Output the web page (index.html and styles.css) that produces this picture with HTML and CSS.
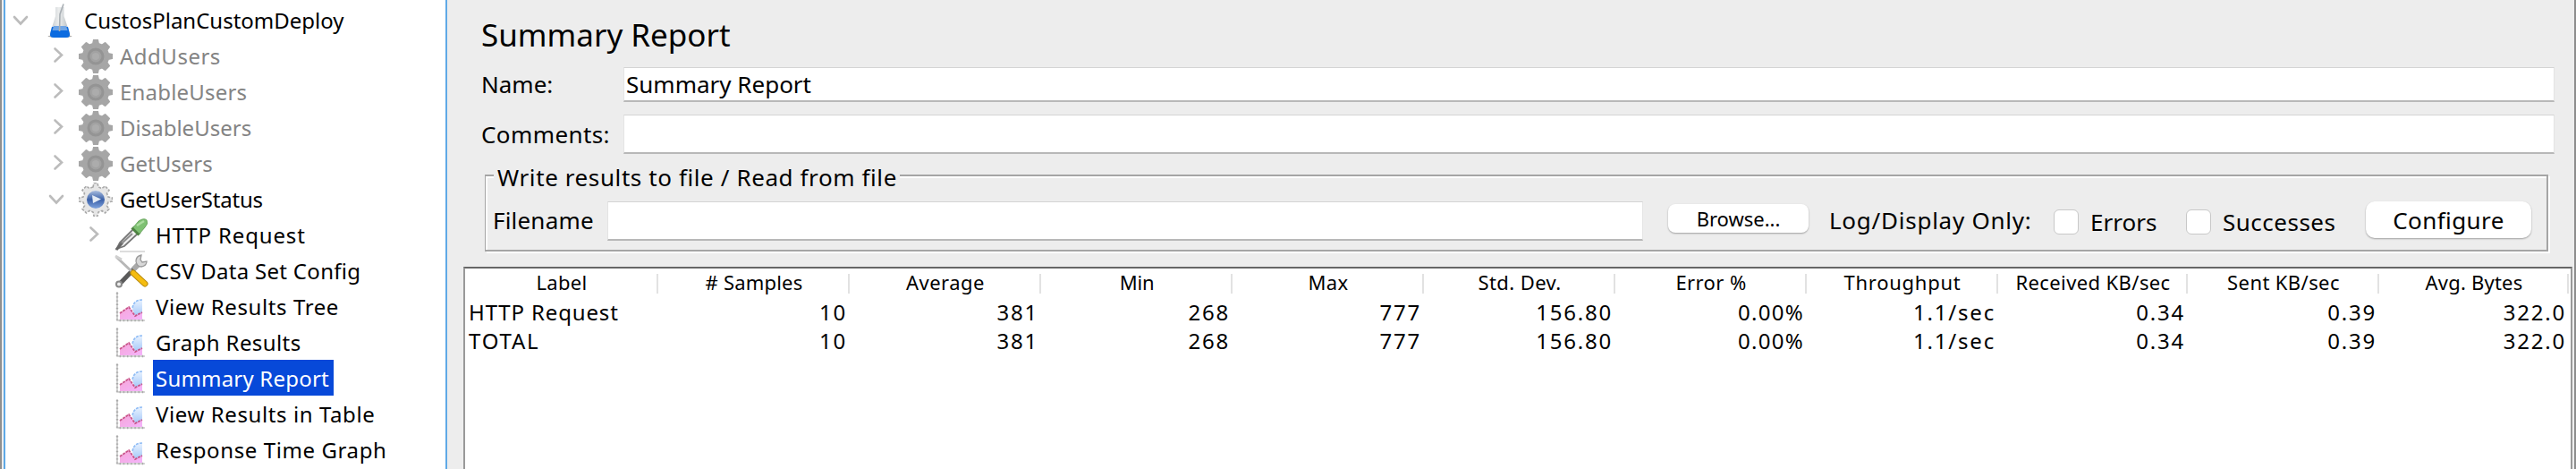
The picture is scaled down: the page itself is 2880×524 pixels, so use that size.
FILE: index.html
```html
<!DOCTYPE html>
<html lang="en"><head><meta charset="utf-8"><title>Summary Report</title>
<link rel="stylesheet" href="styles.css"></head>
<body>
<svg class="defs" width="0" height="0">
<defs>
<linearGradient id="ball" x1="0" y1="0" x2="0" y2="1"><stop offset="0" stop-color="#a9bddf"/><stop offset=".5" stop-color="#3a60a8"/><stop offset="1" stop-color="#7fa3de"/></linearGradient>
<linearGradient id="pink" x1="0" y1="0" x2="1" y2="1"><stop offset="0" stop-color="#f6a6d8"/><stop offset="1" stop-color="#f4b4fb"/></linearGradient>
<linearGradient id="sky" x1="0" y1="0" x2="0" y2="1"><stop offset="0" stop-color="#e8f2ff"/><stop offset="1" stop-color="#a4c8f8"/></linearGradient>
<linearGradient id="glass" x1="0" y1="0" x2="1" y2="0"><stop offset="0" stop-color="#c3c8cc"/><stop offset=".45" stop-color="#eceeee"/><stop offset="1" stop-color="#b4babf"/></linearGradient>
<path id="teeth" d="M16 5 L17 0.500 H21 L22 5 L26 6.500 L29.500 4 L34 8.500 L31.500 12 L33 16 L37.500 17 V21 L33 22 L31.500 26 L34 29.500 L29.500 34 L26 31.500 L22 33 L21 37.500 H17 L16 33 L12 31.500 L8.500 34 L4 29.500 L6.500 26 L5 22 L0.500 21 V17 L5 16 L6.500 12 L4 8.500 L8.500 4 L12 6.500 Z"/>
<symbol id="gear-off" viewBox="0 0 38 38"><use href="#teeth" fill="#a6a6a6" stroke="#a6a6a6" stroke-width="2" stroke-linejoin="round"/><circle cx="19" cy="19" r="8" fill="#a2a2a2" stroke="#949494" stroke-width="3"/><circle cx="19" cy="19" r="4" fill="#acacac"/></symbol>
<symbol id="gear-on" viewBox="0 0 38 38"><use href="#teeth" fill="#e6e6e6" stroke="#a9a9a9" stroke-width="1.600" stroke-dasharray="3 1.500"/><circle cx="19" cy="19" r="10" fill="url(#ball)"/><path d="M15 14 L25 18.500 L16 23 Z" fill="#e4ebf5"/></symbol>
<symbol id="flask" viewBox="0 0 38 38"><ellipse cx="19" cy="36.500" rx="13.500" ry="1.500" fill="#aaa"/><path d="M14 4 H23.500 V14 L30 33 Q31 38 26 38 H12 Q7 38 8 33 L14 14 Z" fill="url(#glass)"/><path d="M10 26 H28 L30 34 Q30.500 38 26 38 H12 Q7.500 38 8 34 Z" fill="#0b6be0"/><path d="M12 25 H26 L27.500 30 H10.500 Z" fill="#6fa5e6"/><path d="M18.500 31 L19 12 L23 0.500" fill="none" stroke="#aab0b5" stroke-width="1.600"/></symbol>
<symbol id="dropper" viewBox="0 0 38 38"><path d="M6 37 H34" stroke="#cfcfcf" stroke-width="1.400"/><path d="M2.500 34 L6 27 L21 12 L26 17 L11 31 Z" fill="#f0f0f0" stroke="#777" stroke-width="1.800"/><path d="M2 35 L9 27" stroke="#666" stroke-width="3"/><path d="M8 28 L20 17" stroke="#8c8c8c" stroke-width="2"/><path d="M20 10 L28 18" stroke="#4d8241" stroke-width="4.500"/><path d="M21 10 L27 3 Q33 -1 36 2 Q38 6 34 10 L28 17 Z" fill="#7fc173" stroke="#6aa65f"/><path d="M25 8 L33 3" stroke="#acdca0" stroke-width="2.500"/></symbol>
<symbol id="tools" viewBox="0 0 38 38"><path d="M5 34 L28 10" stroke="#5a5a5a" stroke-width="5"/><path d="M21 17 L28 10" stroke="#a9a9a9" stroke-width="6"/><circle cx="5" cy="33.500" r="3" fill="#eee" stroke="#888" stroke-width="2"/><path d="M30 1 Q24 2 24 8 Q25 14 30 14 Q36 13 36 8 L31 9 L29 6 Z" fill="#d8d8d8" stroke="#9a9a9a" stroke-width="1.300"/><path d="M2 3 L20 20" stroke="#b7b7b7" stroke-width="3"/><path d="M1 2 L8 6" stroke="#d0d0d0" stroke-width="3"/><path d="M21 21 L34 33" stroke="#b98b10" stroke-width="7" stroke-linecap="round"/><path d="M21 21 L34 33" stroke="#f5bd10" stroke-width="5" stroke-linecap="round"/></symbol>
<symbol id="chart" viewBox="0 0 38 38"><path d="M3 2 V34 H34" fill="none" stroke="#c8c8c8" stroke-width="1.600"/><path d="M3 3 V34 H34" fill="none" stroke="#aaa" stroke-width="2.400" stroke-dasharray="1.400 2.800"/><path d="M31 11 Q21 11 20 21 L23 29 L31 26 Z" fill="url(#sky)"/><path d="M31 11 Q21 11 20 21" fill="none" stroke="#8fbcf5" stroke-width="1.700" stroke-dasharray="3 1.200"/><path d="M6 26 L16 19 L23 29 L31 25 V33 H6 Z" fill="url(#pink)"/><path d="M6 26 L16 19 L23 29 L31 25" fill="none" stroke="#c9568c" stroke-width="1.800" stroke-dasharray="3 1"/></symbol>
<symbol id="open" viewBox="0 0 20 20"><path d="M3 7 L10 14.500 L17 7" fill="none" stroke="#bcbcbc" stroke-width="2.600" stroke-linecap="round"/></symbol>
<symbol id="closed" viewBox="0 0 20 20"><path d="M8.500 2.500 L16 9.500 L8.500 16.500" fill="none" stroke="#bcbcbc" stroke-width="2.600" stroke-linecap="round"/></symbol>
</defs></svg>
<div class="window">
<nav class="tree">
<div class="node l0"><svg class="tw"><use href="#open"/></svg><svg class="ic"><use href="#flask"/></svg><span class="lb">CustosPlanCustomDeploy</span></div>
<div class="node l1 off"><svg class="tw"><use href="#closed"/></svg><svg class="ic"><use href="#gear-off"/></svg><span class="lb t5">AddUsers</span></div>
<div class="node l1 off"><svg class="tw"><use href="#closed"/></svg><svg class="ic"><use href="#gear-off"/></svg><span class="lb t2">EnableUsers</span></div>
<div class="node l1 off"><svg class="tw"><use href="#closed"/></svg><svg class="ic"><use href="#gear-off"/></svg><span class="lb">DisableUsers</span></div>
<div class="node l1 off"><svg class="tw"><use href="#closed"/></svg><svg class="ic"><use href="#gear-off"/></svg><span class="lb">GetUsers</span></div>
<div class="node l1"><svg class="tw"><use href="#open"/></svg><svg class="ic"><use href="#gear-on"/></svg><span class="lb tn">GetUserStatus</span></div>
<div class="node l2"><svg class="tw"><use href="#closed"/></svg><svg class="ic"><use href="#dropper"/></svg><span class="lb t8">HTTP Request</span></div>
<div class="node l2"><i class="tw"></i><svg class="ic"><use href="#tools"/></svg><span class="lb t3">CSV Data Set Config</span></div>
<div class="node l2"><i class="tw"></i><svg class="ic"><use href="#chart"/></svg><span class="lb t6">View Results Tree</span></div>
<div class="node l2"><i class="tw"></i><svg class="ic"><use href="#chart"/></svg><span class="lb t4">Graph Results</span></div>
<div class="node l2"><i class="tw"></i><svg class="ic"><use href="#chart"/></svg><span class="lb sel t2">Summary Report</span></div>
<div class="node l2"><i class="tw"></i><svg class="ic"><use href="#chart"/></svg><span class="lb t6">View Results in Table</span></div>
<div class="node l2"><i class="tw"></i><svg class="ic"><use href="#chart"/></svg><span class="lb t6">Response Time Graph</span></div>
</nav>
<main class="panel">
<h1 class="title">Summary Report</h1>
<div class="row name"><label>Name:</label><div class="field">Summary Report</div></div>
<div class="row comments"><label class="t4">Comments:</label><div class="field"></div></div>
<section class="group"><span class="legend t6">Write results to file / Read from file</span>
<div class="file"><span class="flabel t2">Filename</span><div class="field"></div>
<button class="small">Browse...</button><span class="log t7">Log/Display Only:</span><i class="check"></i><span class="err">Errors</span><i class="check"></i><span class="suc t5">Successes</span><button class="big t4">Configure</button></div>
</section>
<div class="table">
<div class="tr head"><span class="t3">Label</span><span class="t2"># Samples</span><span class="t5">Average</span><span class="tn">Min</span><span class="t3">Max</span><span class="t4">Std. Dev.</span><span class="t4">Error %</span><span class="t7">Throughput</span><span class="t4">Received KB/sec</span><span class="t4">Sent KB/sec</span><span class="t2">Avg. Bytes</span></div>
<div class="tr"><span class="t8">HTTP Request</span><span>10</span><span>381</span><span>268</span><span>777</span><span>156.80</span><span class="pct">0.00%</span><span>1.1/sec</span><span>0.34</span><span>0.39</span><span>322.0</span></div>
<div class="tr"><span>TOTAL</span><span>10</span><span>381</span><span>268</span><span>777</span><span>156.80</span><span class="pct">0.00%</span><span>1.1/sec</span><span>0.34</span><span>0.39</span><span>322.0</span></div>
</div>
</main></div>
</body></html>
```
FILE: styles.css
```css
* { box-sizing: border-box; }
body { margin: 0; background: #ededed; font-family: "Noto Sans", "Open Sans", sans-serif; font-size: 26px; color: #000; }
.defs { position: absolute; }
.window { display: flex; width: 2880px; height: 524px; overflow: hidden; border-left: 2px solid #8f8f8f; border-right: 2px solid #8d8d8d; }
.tree { width: 496px; margin-left: 2px; flex: none; padding-top: 2px; background: #fff; border-left: 2px solid #5fa9e6; border-right: 2px solid #5fa9e6; font-size: 24px; overflow: hidden; }
.node { display: flex; height: 40px; align-items: center; }
.l0 { padding-left: 7px; }
.l1 { padding-left: 47px; }
.l2 { padding-left: 87px; }
.tw { width: 20px; height: 20px; margin-right: 15px; flex: none; }
.ic { width: 38px; height: 38px; margin: 2px 5px 0 0; flex: none; }
.lb { height: 40px; line-height: 41px; padding: 0 5px 0 3px; white-space: pre; }
.off { color: #848484; }
.sel { background: #0749d9; color: #fff; }
.panel { flex: 1; min-width: 0; display: flex; flex-direction: column; }
.title { margin: 0; padding-left: 38px; height: 75px; line-height: 77px; font-size: 35px; font-weight: 400; }
.row { display: flex; padding: 0 22px 0 38px; }
.row label { width: 159px; flex: none; }
.field { flex: 1; background: #fff; border: 1px solid #e4e4e4; border-top-color: #d4d4d4; border-bottom: 2px solid #b8b8b8; padding-left: 2px; }
.name { height: 39px; line-height: 38px; }
.name .field { line-height: 36px; }
.comments { height: 44px; line-height: 45px; margin-top: 14px; }
.group { position: relative; height: 86px; width: 2307px; margin: 23px 0 0 42px; border: 2px solid #a5a5a5; border-left-width: 1px; box-shadow: inset 2px 2px #fff, 2px 2px #fff; padding: 28px 17px 0 8px; }
.legend { position: absolute; left: 9px; top: -17px; height: 36px; line-height: 36px; background: #ededed; padding: 0 3px 0 4px; white-space: pre; }
.file { display: flex; height: 44px; line-height: 43px; white-space: pre; }
.flabel { width: 128px; }
.file .field { flex: none; width: 1158px; }
button { font: inherit; color: inherit; border: 0; background: #fff; padding: 0; box-shadow: 0 1px 2px #0005; }
.small { width: 157px; height: 32px; margin: 3px 23px 0 28px; border-radius: 8px; font-size: 22px; line-height: 31px; }
.big { width: 185px; height: 41px; margin-left: auto; border-radius: 10px; line-height: 38px; }
.log { width: 251px; }
.check { width: 28px; height: 28px; margin: 9px 13px 0 0; border-radius: 6px; background: #fff; border: 1px solid #c8c8c8; }
.err { width: 107px; line-height: 47px; }
.suc { line-height: 47px; }
.table { flex: 1; width: 2358px; margin: 17px 0 0 18px; background: #fff; border: 2px solid #999; border-top-color: #666; border-bottom: 0; }
.tr { display: grid; grid-template-columns: 216px repeat(7, 214px) 212px 214px 212px; height: 32px; line-height: 30px; font-size: 24px; }
.tr span { text-align: right; padding: 0 3px 0 4px; white-space: pre; letter-spacing: 1.8px; }
.tr span:first-child { text-align: left; padding-left: 4px; }
.tr .pct { letter-spacing: 1.3px; }
.head { font-size: 22px; height: 34px; }
.head span, .head span:first-child { text-align: center; height: 22px; line-height: 19px; margin-top: 6px; padding: 0 3px 0 5px; border-right: 2px solid #e2e2e2; }
.tn, .tr .tn { letter-spacing: -.2px; }
.t2, .tr .t2 { letter-spacing: .2px; }
.t3, .tr .t3 { letter-spacing: .3px; }
.t4, .tr .t4 { letter-spacing: .4px; }
.t5, .tr .t5 { letter-spacing: .5px; }
.t6, .tr .t6 { letter-spacing: .6px; }
.t7, .tr .t7 { letter-spacing: .75px; }
.t8, .tr .t8 { letter-spacing: .85px; }
```
